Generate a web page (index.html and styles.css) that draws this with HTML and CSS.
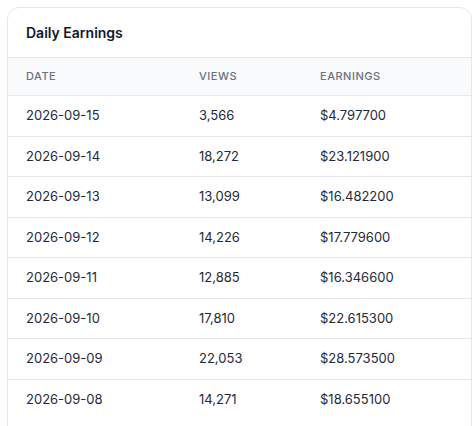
FILE: index.html
```html
<!DOCTYPE html>
<html>
<head>
    <title>Daily Earnings</title>
    <link rel="stylesheet" href="styles.css">
</head>
<body>

    <div class="card">
        <div class="card-header">Daily Earnings</div>
        <table class="earnings-table">
            <thead>
                <tr>
                    <th class="col-date">Date</th>
                    <th class="col-views">Views</th>
                    <th>Earnings</th>
                </tr>
            </thead>
            <tbody>
                <tr><td>2026-09-15</td><td>3,566</td><td>$4.797700</td></tr>
                <tr><td>2026-09-14</td><td>18,272</td><td>$23.121900</td></tr>
                <tr><td>2026-09-13</td><td>13,099</td><td>$16.482200</td></tr>
                <tr><td>2026-09-12</td><td>14,226</td><td>$17.779600</td></tr>
                <tr><td>2026-09-11</td><td>12,885</td><td>$16.346600</td></tr>
                <tr><td>2026-09-10</td><td>17,810</td><td>$22.615300</td></tr>
                <tr><td>2026-09-09</td><td>22,053</td><td>$28.573500</td></tr>
                <tr><td>2026-09-08</td><td>14,271</td><td>$18.655100</td></tr>
            </tbody>
        </table>
    </div>

</body>
</html>
```

FILE: styles.css
```css
body {
    font-family: Inter, "Noto Sans", sans-serif;
    margin: 7px 3px 0 7px;
    padding: 0;
    background-color: white;
    color: #1f2937;
}

.card {
    border: 1px solid #e5e7eb;
    border-radius: 12px;
    background: white;
    overflow: hidden;
    padding-bottom: 24px;
}

.card-header {
    padding: 16px 18px;
    font-size: 14px;
    font-weight: 600;
    line-height: 17px;
    color: #111827;
    border-bottom: 1px solid #e5e7eb;
}

.earnings-table {
    width: 100%;
    border-collapse: collapse;
    text-align: left;
}

.earnings-table th {
    background: #f9fafb;
    color: #6b7280;
    font-size: 11px;
    font-weight: 500;
    text-transform: uppercase;
    letter-spacing: 0.5px;
    padding: 12px 18px;
    line-height: 13px;
    border-bottom: 1px solid #e5e7eb;
}

.earnings-table td {
    font-size: 13px;
    line-height: 15.5px;
    padding: 12px 18px;
    border-bottom: 1px solid #e5e7eb;
}

.earnings-table tr:last-child td {
    border-bottom: none;
}

.col-date {
    width: 137px;
}

.col-views {
    width: 85px;
}
```
